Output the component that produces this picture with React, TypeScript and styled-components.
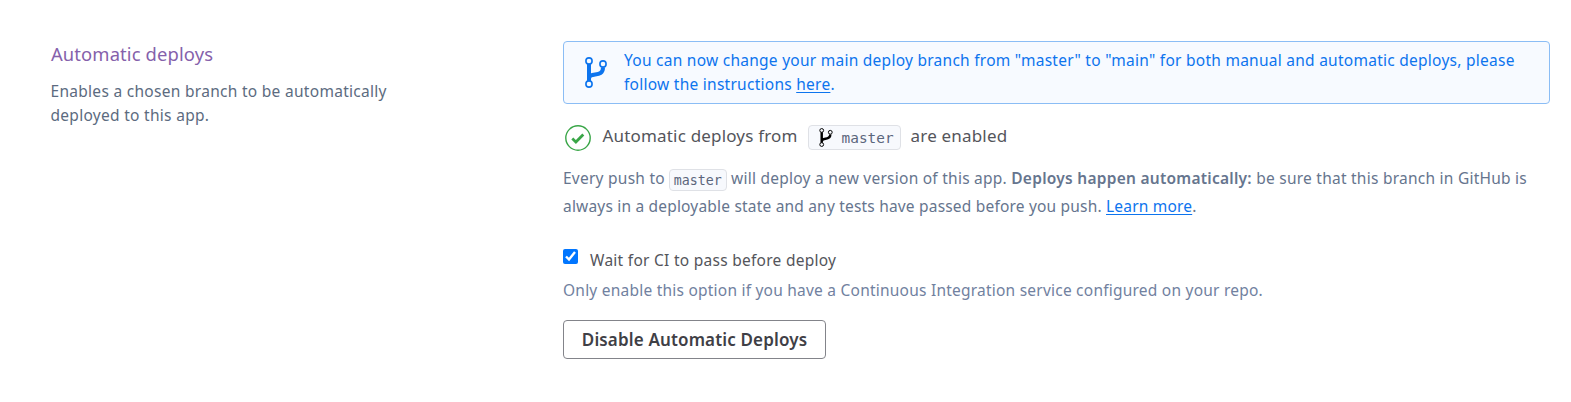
import React from "react";
import styled, { createGlobalStyle } from "styled-components";

const GlobalStyle = createGlobalStyle`
  * { box-sizing: border-box; }
  body {
    margin: 0;
    background: #fff;
    font-family: "Noto Sans", "Open Sans", sans-serif;
    font-size: 15.5px;
    font-weight: 400;
    line-height: 24px;
  }
`;

const Section = styled.section`
  display: grid;
  grid-template-columns: 512px 987px;
  padding: 41px 0 0 51px;
`;

const Title = styled.h2`
  margin: 0;
  color: #8561ab;
  font-size: 18.4px;
  font-weight: 400;
  line-height: 26px;
  letter-spacing: 0.12px;
`;

const Description = styled.p`
  width: 360px;
  margin: 12px 0 0 -0.5px;
  color: #5c6b80;
  letter-spacing: 0.29px;
`;

const Content = styled.div`
  display: flex;
  flex-direction: column;
  align-items: flex-start;
`;

const Alert = styled.div`
  display: flex;
  align-items: center;
  width: 100%;
  height: 63px;
  padding: 0 20px 0 21px;
  gap: 17px;
  border: 1px solid #8bbdf5;
  border-radius: 4px;
  background: #f7faff;
  color: #0d74ee;
`;

const AlertText = styled.p`
  margin: -1px 0 0;
  letter-spacing: 0.26px;
  white-space: nowrap;
`;

const Link = styled.a`
  color: #0d74ee;
  text-decoration: underline;
  text-decoration-thickness: 1px;
  text-underline-offset: 2px;
`;

const Status = styled.div`
  display: flex;
  align-items: center;
  height: 26px;
  margin: 21px 0 0 2px;
  color: #54555b;
  font-size: 17px;
`;

const StatusText = styled.span<{ $start: number }>`
  margin: -5px 0 0 ${(p) => p.$start}px;
  letter-spacing: 0.18px;
  white-space: nowrap;
`;

const BranchBadge = styled.span`
  display: inline-flex;
  align-items: center;
  width: 93px;
  height: 25px;
  margin: -1px 0 0 10px;
  padding-left: 10px;
  gap: 9px;
  border: 1px solid #dfe1e6;
  border-radius: 4px;
  background: #f7f9fd;
  color: #5b667c;
  font: 14.4px/24px "DejaVu Sans Mono", monospace;
`;

const BadgeText = styled.span`
  padding-top: 1px;
`;

const Explanation = styled.div`
  margin-top: 13px;
  color: #66758e;
  line-height: 28px;
  white-space: nowrap;
`;

const Line = styled.div<{ $track?: number }>`
  height: 28px;
  letter-spacing: ${(p) => p.$track ?? 0}px;
`;

const Code = styled.code`
  display: inline-block;
  height: 22px;
  margin: 0 0 0 -0.5px;
  padding: 0 4px;
  border: 1px solid #dfe1e6;
  border-radius: 4px;
  background: #f7f9fd;
  color: #5b667c;
  font: 13.3px/22px "DejaVu Sans Mono", monospace;
  letter-spacing: 0;
  vertical-align: -1px;
`;

const Strong = styled.strong`
  font-weight: 600;
  letter-spacing: 0.26px;
`;

const CheckboxLabel = styled.label`
  display: flex;
  margin-top: 27px;
  color: #54555b;
  letter-spacing: 0.27px;
`;

const Checkbox = styled.input`
  width: 15px;
  height: 15px;
  margin: 2px 12px 0 0;
  accent-color: #0176ff;
`;

const CheckboxText = styled.span`
  margin-top: 1px;
`;

const Hint = styled.p`
  margin: 6px 0 0;
  color: #7181a0;
  letter-spacing: 0.225px;
`;

const Button = styled.button`
  width: 263px;
  height: 39px;
  margin-top: 18px;
  padding: 0;
  border: 1px solid #83848a;
  border-radius: 4px;
  background: #fff;
  color: #3f4046;
  font: 600 17px/36px "Noto Sans", sans-serif;
  letter-spacing: 0.15px;
`;

const BranchIcon = ({ width, height }: { width: number; height: number }) => (
  <svg width={width} height={height} viewBox="0 0 22 31" fill="none" stroke="currentColor">
    <path d="M4 7V24M4 22C4 14 18 21.500 18 10.500" strokeWidth="4" />
    <circle cx="4" cy="4" r="3.1" strokeWidth="1.6" />
    <circle cx="18" cy="7" r="3.1" strokeWidth="1.6" />
    <circle cx="4" cy="27" r="3.1" strokeWidth="1.6" />
  </svg>
);

const BadgeIcon = styled.span`
  display: flex;
  color: #000;
`;

const CheckIcon = () => (
  <svg width="26" height="26" viewBox="0 0 26 26" fill="none" stroke="#3aa648">
    <circle cx="13" cy="13" r="12.200" strokeWidth="1.400" />
    <path d="M7.300 13.600L10.900 17L18.300 9.600" strokeWidth="2.800" />
  </svg>
);

export default function App() {
  return (
    <>
      <GlobalStyle />
      <Section>
        <div>
          <Title>Automatic deploys</Title>
          <Description>Enables a chosen branch to be automatically deployed to this app.</Description>
        </div>
        <Content>
          <Alert>
            <BranchIcon width={22} height={31} />
            <AlertText>
              You can now change your main deploy branch from "master" to "main" for both manual and automatic
              deploys, please
              <br />
              follow the instructions <Link>here</Link>.
            </AlertText>
          </Alert>
          <Status>
            <CheckIcon />
            <StatusText $start={11.5}>Automatic deploys from</StatusText>
            <BranchBadge>
              <BadgeIcon>
                <BranchIcon width={14} height={19} />
              </BadgeIcon>
              <BadgeText>master</BadgeText>
            </BranchBadge>
            <StatusText $start={10}>are enabled</StatusText>
          </Status>
          <Explanation>
            <Line $track={0.245}>
              Every push to <Code>master</Code> will deploy a new version of this app.{" "}
              <Strong>Deploys happen automatically:</Strong> be sure that this branch in GitHub is
            </Line>
            <Line $track={0.19}>
              always in a deployable state and any tests have passed before you push. <Link>Learn more</Link>.
            </Line>
          </Explanation>
          <CheckboxLabel>
            <Checkbox type="checkbox" defaultChecked />
            <CheckboxText>Wait for CI to pass before deploy</CheckboxText>
          </CheckboxLabel>
          <Hint>Only enable this option if you have a Continuous Integration service configured on your repo.</Hint>
          <Button>Disable Automatic Deploys</Button>
        </Content>
      </Section>
    </>
  );
}
